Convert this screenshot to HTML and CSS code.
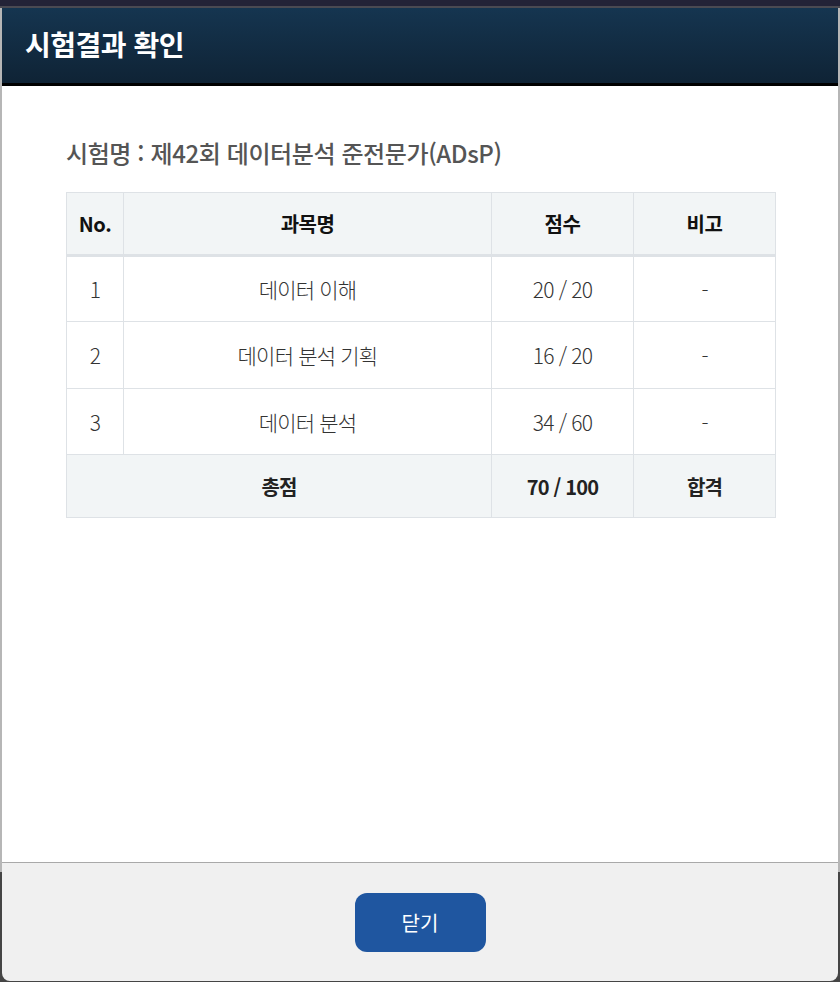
FILE: index.html
```html
<!DOCTYPE html>
<html lang="ko">
<head>
<meta charset="utf-8">
<title>시험결과 확인</title>
<link rel="stylesheet" href="styles.css">
</head>
<body>
<div class="topbar"></div>
<div class="modal">
  <div class="modal-header">
    <h1 class="modal-title">시험결과 확인</h1>
  </div>
  <div class="modal-body">
    <p class="exam-name">시험명 : 제42회 데이터분석 준전문가(ADsP)</p>
    <table class="result">
      <colgroup>
        <col class="c-no">
        <col class="c-subj">
        <col class="c-score">
        <col class="c-note">
      </colgroup>
      <thead>
        <tr>
          <th>No.</th>
          <th>과목명</th>
          <th>점수</th>
          <th>비고</th>
        </tr>
      </thead>
      <tbody>
        <tr class="r1">
          <td>1</td>
          <td>데이터 이해</td>
          <td>20 / 20</td>
          <td>-</td>
        </tr>
        <tr class="r2">
          <td>2</td>
          <td>데이터 분석 기획</td>
          <td>16 / 20</td>
          <td>-</td>
        </tr>
        <tr class="r3">
          <td>3</td>
          <td>데이터 분석</td>
          <td>34 / 60</td>
          <td>-</td>
        </tr>
        <tr class="total">
          <td colspan="2">총점</td>
          <td>70 / 100</td>
          <td>합격</td>
        </tr>
      </tbody>
    </table>
  </div>
  <div class="modal-footer">
    <button class="btn-close" type="button">닫기</button>
  </div>
</div>
</body>
</html>
```
FILE: styles.css
```css
html, body {
  margin: 0;
  padding: 0;
}
body {
  width: 840px;
  height: 982px;
  overflow: hidden;
  background: linear-gradient(to bottom, #b6b6b6 0, #b6b6b6 872px, #454545 872px, #454545 100%);
  font-family: "Noto Sans CJK KR", "Noto Sans", sans-serif;
}
.topbar {
  height: 6px;
  background: #232337;
  border-bottom: 2px solid #4a4a52;
}
.modal {
  margin: 0 2px;
  width: 836px;
  display: flex;
  flex-direction: column;
}
.modal-header {
  height: 75px;
  background: linear-gradient(to bottom, #153550, #0f2335);
  border-bottom: 3px solid #000;
  display: flex;
  align-items: center;
  padding: 0 23px;
}
.modal-title {
  margin: 0;
  color: #fff;
  font-size: 28px;
  font-weight: 700;
  letter-spacing: -0.5px;
  line-height: 1;
  padding-bottom: 4px;
}
.modal-body {
  background: #fff;
  height: 776px;
  padding: 0 63px 0 64px;
  box-sizing: border-box;
}
.exam-name {
  margin: 51px 0 24px;
  font-size: 24px;
  line-height: 31px;
  font-weight: 500;
  color: #555;
  letter-spacing: -0.4px;
}
.result {
  width: 710px;
  border-collapse: collapse;
  table-layout: fixed;
  font-size: 21px;
  text-align: center;
}
.c-no { width: 57px; }
.c-subj { width: 368px; }
.c-score { width: 142px; }
.c-note { width: 142px; }
.result th,
.result td {
  border: 1px solid #dee2e6;
  padding: 0;
  vertical-align: middle;
}
.result th {
  height: 61px;
  background: #f2f5f6;
  color: #111;
  font-size: 20px;
  font-weight: 700;
  border-bottom: 3px solid #dee2e6;
  letter-spacing: -0.5px;
}
.result td {
  color: #333;
  font-weight: 300;
  letter-spacing: -0.8px;
}
.r1 td { height: 64px; }
.r2 td { height: 66px; }
.r3 td { height: 65px; }
.result .total td {
  height: 62px;
  background: #f2f5f6;
  font-size: 20px;
  font-weight: 700;
  color: #222;
}
.modal-footer {
  height: 118px;
  background: #f0f0f0;
  border-top: 1px solid #a9a9a9;
  border-radius: 0 0 8px 8px;
  display: flex;
  align-items: center;
  justify-content: center;
}
.btn-close {
  width: 131px;
  height: 59px;
  border: none;
  border-radius: 12px;
  background: #1f56a0;
  color: #fff;
  font-family: "Noto Sans CJK KR", "Noto Sans", sans-serif;
  font-size: 20px;
  font-weight: 400;
  margin-top: 1px;
  padding: 0;
}
```
